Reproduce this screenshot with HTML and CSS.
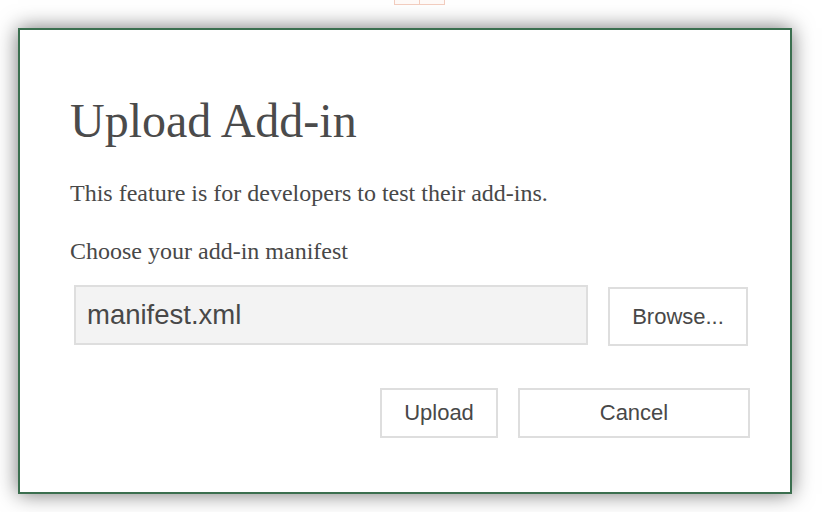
FILE: index.html
```html
<!DOCTYPE html>
<html lang="en">
<head>
<meta charset="utf-8">
<title>Upload Add-in</title>
<link rel="stylesheet" href="styles.css">
</head>
<body>
<div class="ribbon-peek"><span class="peek-cell"></span><span class="peek-cell"></span></div>
<div class="dialog">
  <h1 class="title">Upload Add-in</h1>
  <p class="text">This feature is for developers to test their add-ins.</p>
  <p class="text">Choose your add-in manifest</p>
  <div class="file-row">
    <div class="file-input">manifest.xml</div>
    <button class="btn btn-browse">Browse...</button>
  </div>
  <div class="actions">
    <button class="btn btn-upload">Upload</button>
    <button class="btn btn-cancel">Cancel</button>
  </div>
</div>
</body>
</html>
```

FILE: styles.css
```css
html, body {
  margin: 0;
  padding: 0;
  background: #ffffff;
  width: 838px;
  height: 512px;
  overflow: hidden;
}

body {
  position: relative;
  padding-top: 28px;
  box-sizing: border-box;
}

.ribbon-peek {
  position: absolute;
  left: 394px;
  top: -10px;
  display: flex;
}

.peek-cell {
  display: block;
  width: 24px;
  height: 13px;
  border: 1px solid #f3cdbf;
  background: #fffaf8;
}

.peek-cell + .peek-cell {
  border-left: none;
}

.dialog {
  margin-left: 18px;
  width: 774px;
  height: 466px;
  box-sizing: border-box;
  border: 2px solid #3b6f4f;
  background: #ffffff;
  box-shadow: 0 0 20px rgba(0, 0, 0, 0.55);
  padding: 63px 40px 0 50px;
  position: relative;
}

.title {
  margin: 0;
  font-family: "Liberation Serif", "Times New Roman", serif;
  font-weight: normal;
  font-size: 48px;
  line-height: 56px;
  color: #4b4b4b;
}

.text {
  margin: 30px 0 0 0;
  font-family: "Liberation Serif", "Times New Roman", serif;
  font-size: 24px;
  line-height: 28px;
  color: #484848;
}

.file-row {
  display: flex;
  align-items: flex-start;
  gap: 20px;
  margin-top: 20px;
  margin-left: 4px;
}

.file-input {
  width: 514px;
  height: 60px;
  box-sizing: border-box;
  border: 2px solid #dedede;
  background: #f3f3f3;
  display: flex;
  align-items: center;
  padding-left: 11px;
  font-family: "Liberation Sans", Arial, sans-serif;
  font-size: 27.5px;
  color: #484848;
}

.btn {
  box-sizing: border-box;
  border: 2px solid #dedede;
  background: #ffffff;
  font-family: "Liberation Sans", Arial, sans-serif;
  font-size: 22px;
  color: #484848;
  padding: 0;
  margin: 0;
}

.btn-browse {
  width: 140px;
  height: 59px;
  margin-top: 2px;
}

.actions {
  display: flex;
  justify-content: flex-end;
  gap: 20px;
  margin-top: 42px;
}

.btn-upload {
  width: 118px;
  height: 50px;
}

.btn-cancel {
  width: 232px;
  height: 50px;
}
```
